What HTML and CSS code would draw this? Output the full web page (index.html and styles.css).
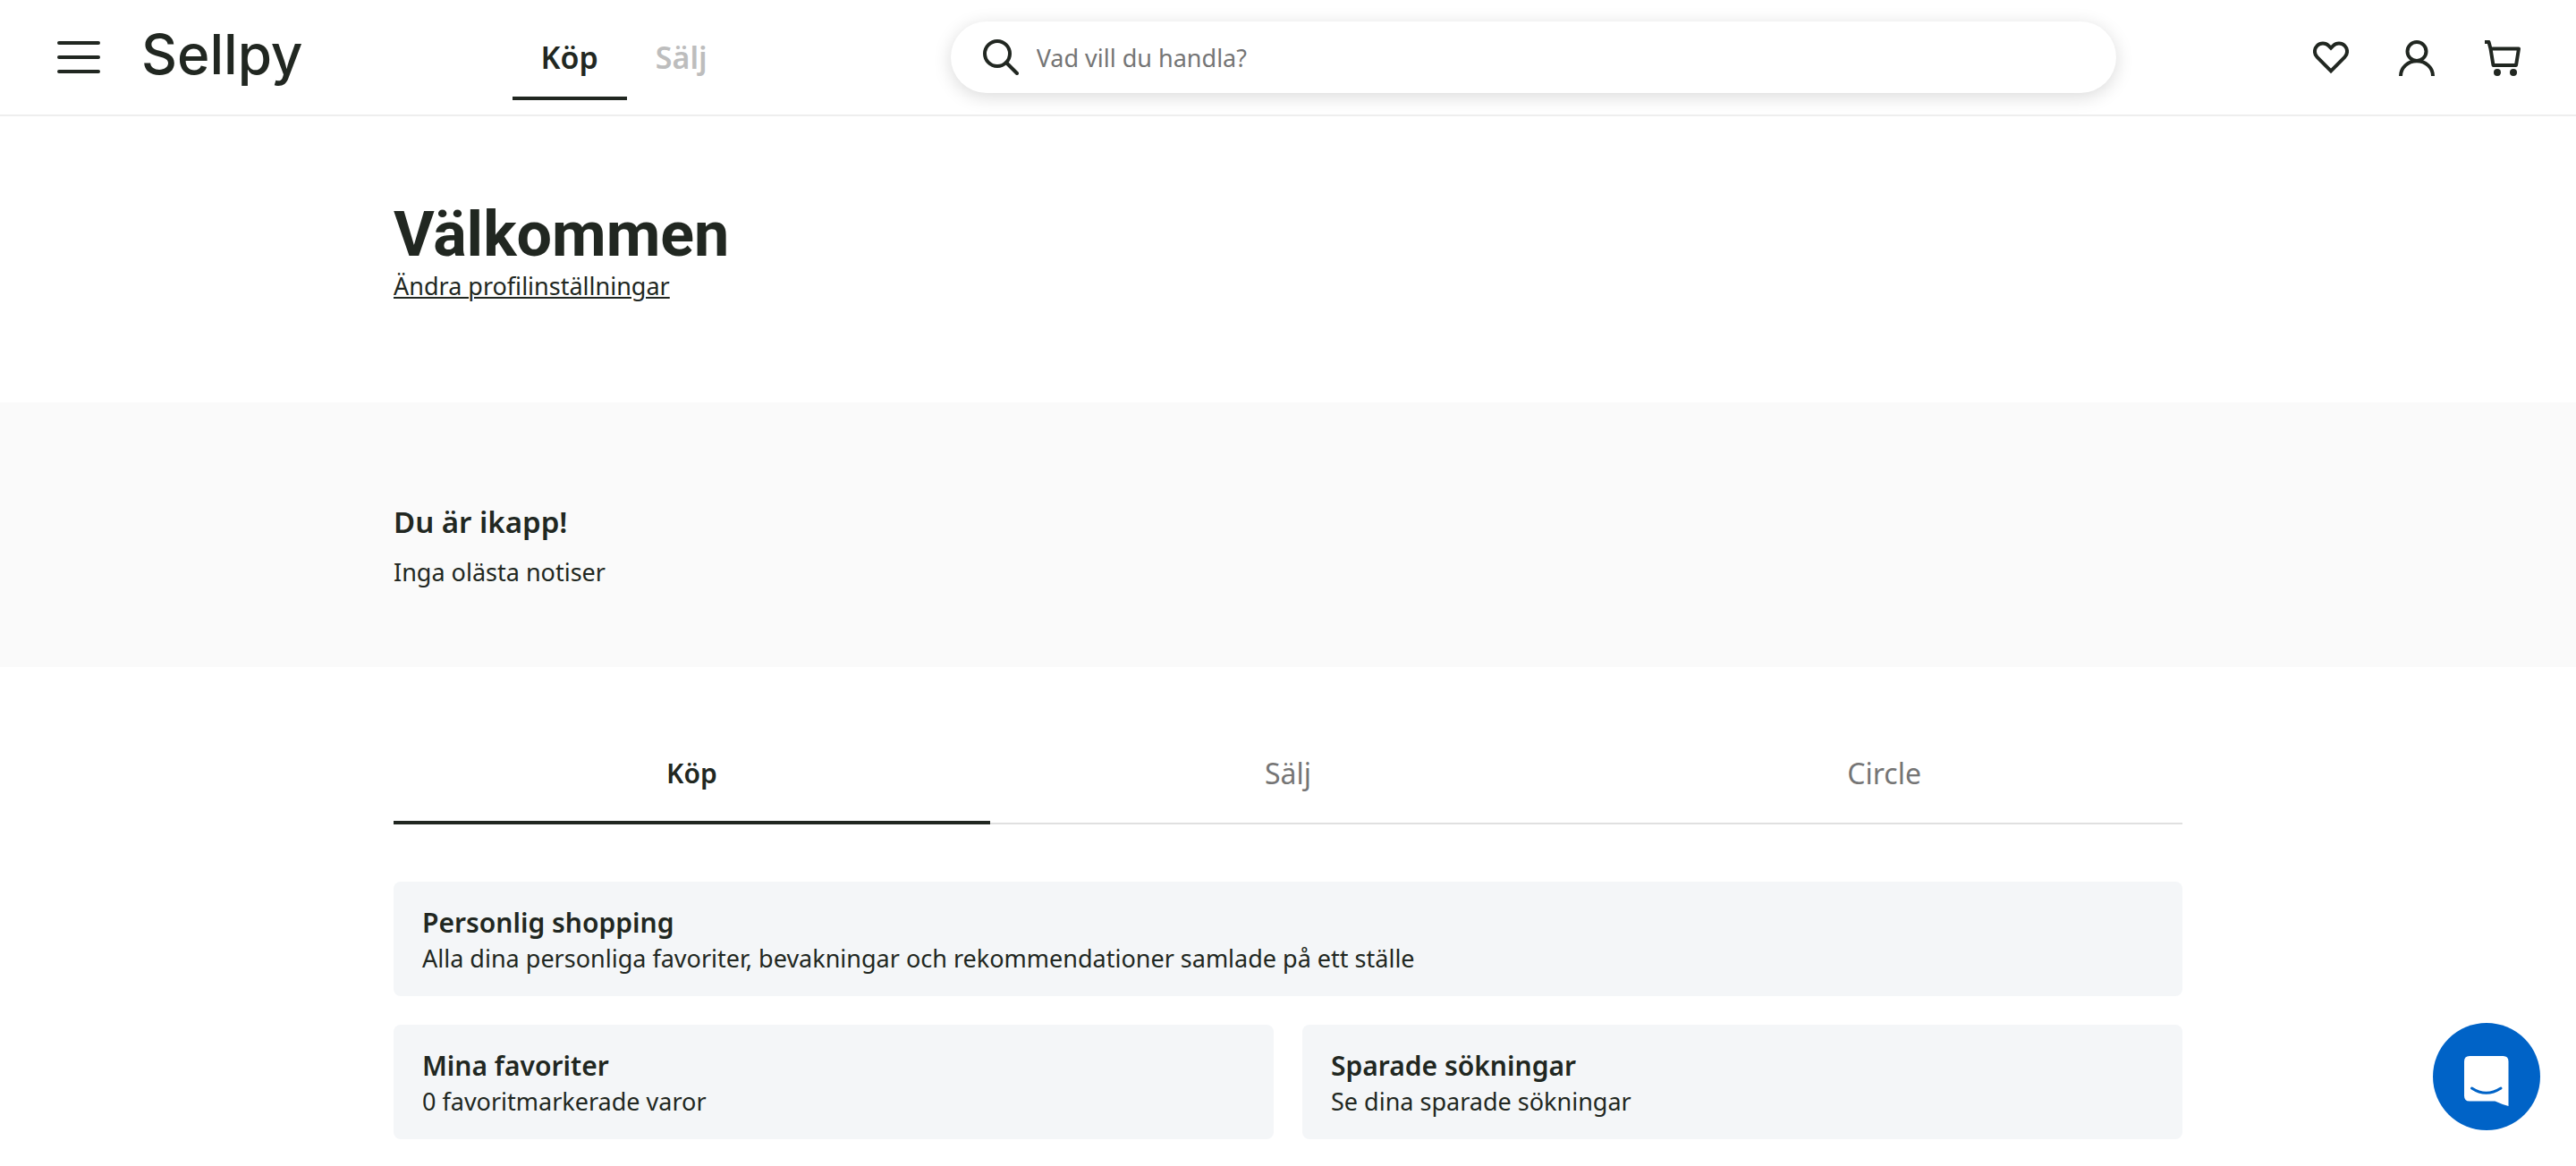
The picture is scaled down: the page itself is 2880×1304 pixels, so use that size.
FILE: index.html
```html
<!DOCTYPE html>
<html lang="sv">
<head>
<meta charset="utf-8">
<meta name="viewport" content="width=device-width, initial-scale=1">
<title>Sellpy</title>
<link rel="stylesheet" href="styles.css">
</head>
<body>
<header class="header">
  <button class="icon-button" type="button" aria-label="Meny">
    <svg width="48" height="36" viewBox="0 0 48 36" stroke="currentColor" stroke-width="4" stroke-linecap="round"><path d="M2 2H46M2 18H46M2 34H46"/></svg>
  </button>
  <a class="logo" href="#">Sellpy</a>
  <nav class="mode">
    <a class="mode-link mode-active" href="#">Köp</a>
    <a class="mode-link" href="#">Sälj</a>
  </nav>
  <form class="search" role="search">
    <svg width="40" height="40" viewBox="0 0 40 40" fill="none" stroke="currentColor" stroke-width="4" stroke-linecap="round"><circle cx="16" cy="16" r="14"/><path d="M26 26L38 38"/></svg>
    <input class="search-input" type="search" placeholder="Vad vill du handla?" aria-label="Sök">
  </form>
  <div class="actions">
    <a class="icon-button" href="#" aria-label="Favoriter">
      <svg width="40" height="40" viewBox="0 0 40 40" fill="none" stroke="currentColor" stroke-width="4"><path d="M20 34.300L4.600 18.900A9 9 0 0 1 17.400 6.100L20 8.700L22.600 6.100A9 9 0 0 1 35.400 18.900Z"/></svg>
    </a>
    <a class="icon-button" href="#" aria-label="Mitt konto">
      <svg width="40" height="40" viewBox="0 0 40 40" fill="none" stroke="currentColor" stroke-width="4"><circle cx="20" cy="12.500" r="10.500"/><path d="M2 40A18 16.800 0 0 1 38 40"/></svg>
    </a>
    <a class="icon-button" href="#" aria-label="Varukorg">
      <svg width="40" height="40" viewBox="0 0 40 40" fill="none" stroke="currentColor" stroke-width="4" stroke-linejoin="round"><path d="M0 2H4.500L6.500 9.500H38L35 28H9.500L6.500 9.500"/><circle cx="14" cy="36" r="4" fill="currentColor" stroke="none"/><circle cx="32" cy="36" r="4" fill="currentColor" stroke="none"/></svg>
    </a>
  </div>
</header>
<main>
  <section class="welcome container">
    <h1 class="welcome-title">Välkommen</h1>
    <a class="settings-link" href="#">Ändra profilinställningar</a>
  </section>
  <section class="notices">
    <div class="container">
      <h2 class="notices-title">Du är ikapp!</h2>
      <p>Inga olästa notiser</p>
    </div>
  </section>
  <section class="container">
    <div class="tabs" role="tablist">
      <button class="tab tab-active" type="button" role="tab" aria-selected="true">Köp</button>
      <button class="tab" type="button" role="tab" aria-selected="false">Sälj</button>
      <button class="tab" type="button" role="tab" aria-selected="false">Circle</button>
    </div>
    <div class="cards">
      <a class="card card-wide" href="#"><h3 class="card-title">Personlig shopping</h3><p>Alla dina personliga favoriter, bevakningar och rekommendationer samlade på ett ställe</p></a>
      <a class="card" href="#"><h3 class="card-title">Mina favoriter</h3><p>0 favoritmarkerade varor</p></a>
      <a class="card" href="#"><h3 class="card-title">Sparade sökningar</h3><p>Se dina sparade sökningar</p></a>
    </div>
  </section>
</main>
<button class="chat" type="button" aria-label="Öppna chatten">
  <svg width="50" height="56" viewBox="0 0 50 56"><path fill="#fff" d="M6 0H43.500Q49.500 0 49.500 6V56Q42 54 34.500 50.500H6Q0 50.500 0 44.500V6Q0 0 6 0Z"/><path d="M8.500 36Q24.500 46.500 41 36" fill="none" stroke="#0063c7" stroke-width="3" stroke-linecap="round"/></svg>
</button>
</body>
</html>
```
FILE: styles.css
```css
* {
  box-sizing: border-box;
}

body {
  margin: 0;
  color: #212721;
  background: #fff;
  font-family: "Noto Sans", sans-serif;
  font-size: 27px;
  line-height: 40px;
}

h1, h2, h3, p {
  margin: 0;
}

a {
  color: inherit;
  text-decoration: none;
}

button {
  padding: 0;
  border: 0;
  background: none;
  color: inherit;
  font: inherit;
  cursor: pointer;
}

svg {
  display: block;
}

.header {
  display: flex;
  align-items: center;
  height: 130px;
  padding: 0 62px 0 64px;
  border-bottom: 2px solid #eee;
}

.icon-button {
  flex: none;
}

.logo {
  margin-left: 46px;
  padding-bottom: 6px;
  font-family: Inter, sans-serif;
  font-size: 62px;
  font-weight: 500;
  line-height: 80px;
}

.mode {
  display: flex;
  margin-left: 234px;
}

.mode-link {
  height: 96px;
  padding: 28px 32px 0;
  border-bottom: 4px solid transparent;
  font-size: 34px;
  font-weight: 600;
  color: #bdbdbd;
}

.mode-active {
  border-color: #212721;
  color: #212721;
}

.search {
  display: flex;
  flex: 1;
  align-items: center;
  gap: 20px;
  height: 80px;
  margin-left: 240px;
  margin-right: 220px;
  padding: 0 36px;
  border-radius: 40px;
  background: #fff;
  box-shadow: 0 4px 20px rgba(0, 0, 0, 0.15);
}

.search-input {
  flex: 1;
  min-width: 0;
  padding: 2px 0 0;
  border: 0;
  outline: 0;
  background: none;
  color: inherit;
  font: inherit;
}

.search-input::placeholder {
  color: #757575;
  opacity: 1;
}

.actions {
  display: flex;
  gap: 56px;
  padding-top: 2px;
}

.container {
  width: calc(100% - 64px);
  max-width: 2000px;
  margin: 0 auto;
}

.welcome {
  padding: 94px 0 110px;
}

.welcome-title {
  font-family: Roboto, sans-serif;
  font-size: 70px;
  font-weight: 700;
  line-height: 76px;
}

.settings-link {
  text-decoration: underline;
  text-decoration-thickness: 2px;
  text-underline-offset: 2px;
}

.notices {
  padding: 110px 0 86px;
  background: #fafafa;
}

.notices-title {
  margin-bottom: 12px;
  font-size: 33px;
  font-weight: 600;
  line-height: 48px;
}

.tabs {
  display: grid;
  grid-template-columns: repeat(3, 1fr);
  margin-top: 64px;
  box-shadow: inset 0 -2px #e0e0e0;
}

.tab {
  height: 112px;
  padding-top: 2px;
  border-bottom: 4px solid transparent;
  color: #757575;
  font-size: 32px;
}

.tab-active {
  border-color: #212721;
  color: #212721;
  font-size: 30px;
  font-weight: 600;
}

.cards {
  display: grid;
  grid-template-columns: 1fr 1fr;
  gap: 32px;
  margin-top: 64px;
  padding-bottom: 30px;
}

.card {
  padding: 26px 32px 22px;
  border-radius: 8px;
  background: #f4f6f8;
}

.card-wide {
  grid-column: 1 / -1;
}

.card-title {
  font-size: 30px;
  font-weight: 600;
  line-height: 40px;
}

.chat {
  position: fixed;
  right: 40px;
  bottom: 40px;
  display: flex;
  align-items: center;
  justify-content: center;
  width: 120px;
  height: 120px;
  padding-top: 10px;
  border-radius: 50%;
  background: #0063c7;
}
```
